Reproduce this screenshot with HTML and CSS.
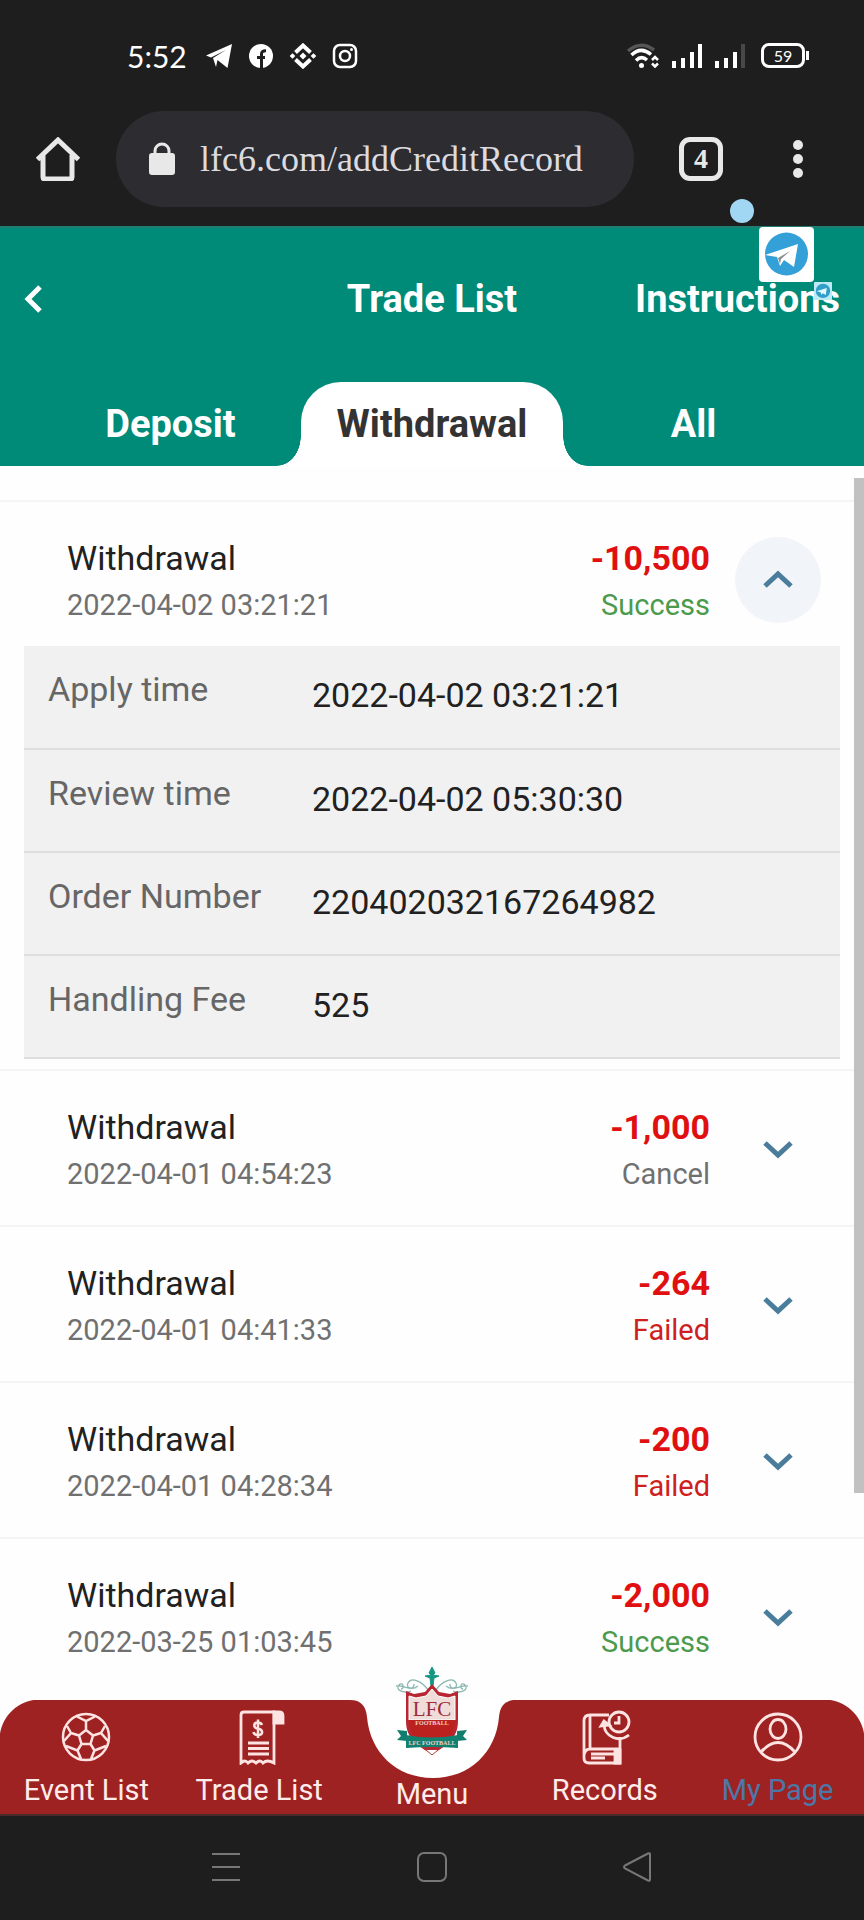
FILE: index.html
```html
<!DOCTYPE html>
<html lang="en">
<head>
<meta charset="utf-8">
<meta name="viewport" content="width=device-width, initial-scale=1">
<title>Trade List</title>
<link rel="stylesheet" href="styles.css">
</head>
<body>
<div class="statusbar">
  <div class="status-left">
    <span class="clock">5:52</span>
    <svg width="28" height="26" viewBox="0 0 28 26" fill="#fff"><path d="M1 12.500 27 1 22.500 25 12.500 17 11 24 8 15 21 7 6 14.500z"/></svg>
    <svg width="26" height="26" viewBox="0 0 26 26"><circle cx="13" cy="13" r="12" fill="#fff"/><path d="M13.500 25v-9M13.500 16v-5q0-3.500 4.500-3.300M9 14.500h8" fill="none" stroke="#1e1e1e" stroke-width="3"/></svg>
    <svg width="28" height="26" viewBox="0 0 28 26"><g fill="none" stroke="#fff" stroke-width="4"><path d="m6.500 9.500 7.500-7 7.500 7M6.500 16.500l7.500 7 7.500-7"/></g><path d="m14 9.500 3.500 3.500-3.500 3.500-3.500-3.500zM3.500 10.200 6.300 13l-2.800 2.800L.7 13zM24.500 10.200l2.800 2.800-2.800 2.800-2.800-2.800z" fill="#fff"/></svg>
    <svg width="26" height="26" viewBox="0 0 26 26" fill="none" stroke="#fff" stroke-width="2.500"><rect x="2" y="2" width="22" height="22" rx="6"/><circle cx="13" cy="13" r="5"/><circle cx="19.500" cy="6.500" r="1.500" fill="#fff" stroke="none"/></svg>
  </div>
  <div class="status-right">
    <svg width="34" height="26" viewBox="0 0 34 26" fill="none" stroke="#fff" stroke-width="3.500"><path d="M2 8Q15-3 28 7" stroke="#555"/><path d="M5.500 12Q15 3 25 11.500M10 17.500Q15.500 12 21 17"/><circle cx="15.500" cy="22.500" r="2.500" fill="#fff" stroke="none"/><path d="m26 17 3-3 3 3M26 20.500l3 3 3-3" stroke-width="2.500"/></svg>
    <svg width="32" height="26" viewBox="0 0 32 26" fill="#fff"><path d="M1 18h4v7H1zM10 15h4v10h-4zM19 9h4v16h-4zM27 1h4v24h-4z"/></svg>
    <svg width="32" height="26" viewBox="0 0 32 26" fill="#fff"><path d="M1 18h4v7H1zM10 15h4v10h-4zM19 9h4v16h-4z"/><path d="M27 1h4v24h-4z" fill="#484848"/></svg>
    <span class="battery">59</span>
  </div>
</div>
<div class="browserbar">
  <button class="plain" aria-label="Home"><svg width="44" height="44" viewBox="0 0 44 44" fill="none" stroke="#e8e8e8" stroke-width="5"><path d="M1.500 22.500 22 3l20.500 19.500M7 18v22q0 2 2 2h25q2 0 2-2V18"/></svg></button>
  <div class="address">
    <svg width="28" height="34" viewBox="0 0 28 34"><rect x="1" y="11" width="26" height="22" rx="3" fill="#e8e8e8"/><path d="M7 12V9a7 7 0 0 1 14 0v3" fill="none" stroke="#e8e8e8" stroke-width="3"/></svg>
    <input class="url" aria-label="Address" value="lfc6.com/addCreditRecord">
  </div>
  <button class="tabcount" aria-label="Open tabs">4</button>
  <button class="plain" aria-label="More"><svg width="12" height="44" viewBox="0 0 12 44" fill="#e8e8e8"><circle cx="6" cy="8" r="5"/><circle cx="6" cy="22" r="5"/><circle cx="6" cy="36" r="5"/></svg></button>
</div>
<header class="header">
  <div class="bubbles" aria-hidden="true">
    <span class="dot"></span>
    <svg class="tg-large" viewBox="0 0 55 55"><rect width="55" height="55" rx="4" fill="#fff"/><circle cx="27.500" cy="27" r="21.500" fill="#34a0d8"/><path d="M6 28 39 17l-4 23-10-7-4 6-3-9z" fill="#fff"/><path d="m19 31 12-7-9 8-1 5z" fill="#8a9095"/></svg>
    <svg class="tg-small" viewBox="0 0 55 55"><rect width="55" height="55" rx="2" fill="#bdeaf4"/><circle cx="27.500" cy="27" r="22" fill="#319fca"/><path d="M8 28 39 18l-3 22-9-6-4 5-3-8z" fill="#e5faff"/></svg>
  </div>
  <div class="titlebar">
    <button class="plain back" aria-label="Back"><svg width="20" height="28" viewBox="0 0 20 28" fill="none" stroke="#fff" stroke-width="5"><path d="M16 2 4 14l12 12"/></svg></button>
    <h1 class="title">Trade List</h1>
    <a class="instructions" href="#">Instructions</a>
  </div>
  <nav class="tabs">
    <button class="tab">Deposit</button>
    <button class="tab active">Withdrawal</button>
    <button class="tab">All</button>
  </nav>
</header>
<main class="list">
  <div class="scrollbar"></div>
  <article class="record open">
    <div class="head">
      <div class="what"><div class="kind">Withdrawal</div><div class="small">2022-04-02 03:21:21</div></div>
      <div class="sum"><div class="amount">-10,500</div><div class="small success">Success</div></div>
      <button class="toggle" aria-label="Collapse"><svg width="30" height="20" viewBox="0 0 30 20"><path d="M2 16 15 4l13 12"/></svg></button>
    </div>
    <table class="details">
      <tr><th>Apply time</th><td>2022-04-02 03:21:21</td></tr>
      <tr><th>Review time</th><td>2022-04-02 05:30:30</td></tr>
      <tr><th>Order Number</th><td>220402032167264982</td></tr>
      <tr><th>Handling Fee</th><td>525</td></tr>
    </table>
  </article>
  <article class="record">
    <div class="head">
      <div class="what"><div class="kind">Withdrawal</div><div class="small">2022-04-01 04:54:23</div></div>
      <div class="sum"><div class="amount">-1,000</div><div class="small">Cancel</div></div>
      <button class="toggle" aria-label="Expand"><svg width="30" height="20" viewBox="0 0 30 20"><path d="m2 4 13 12L28 4"/></svg></button>
    </div>
  </article>
  <article class="record">
    <div class="head">
      <div class="what"><div class="kind">Withdrawal</div><div class="small">2022-04-01 04:41:33</div></div>
      <div class="sum"><div class="amount">-264</div><div class="small failed">Failed</div></div>
      <button class="toggle" aria-label="Expand"><svg width="30" height="20" viewBox="0 0 30 20"><path d="m2 4 13 12L28 4"/></svg></button>
    </div>
  </article>
  <article class="record">
    <div class="head">
      <div class="what"><div class="kind">Withdrawal</div><div class="small">2022-04-01 04:28:34</div></div>
      <div class="sum"><div class="amount">-200</div><div class="small failed">Failed</div></div>
      <button class="toggle" aria-label="Expand"><svg width="30" height="20" viewBox="0 0 30 20"><path d="m2 4 13 12L28 4"/></svg></button>
    </div>
  </article>
  <article class="record">
    <div class="head">
      <div class="what"><div class="kind">Withdrawal</div><div class="small">2022-03-25 01:03:45</div></div>
      <div class="sum"><div class="amount">-2,000</div><div class="small success">Success</div></div>
      <button class="toggle" aria-label="Expand"><svg width="30" height="20" viewBox="0 0 30 20"><path d="m2 4 13 12L28 4"/></svg></button>
    </div>
  </article>
</main>
<nav class="bottomnav">
  <svg class="notch" viewBox="0 0 166 79" aria-hidden="true"><path d="M0 0C11 0 16 6 17 17C20 52 46 78 83 78S146 52 149 17C150 6 155 0 166 0z" fill="#fff"/></svg>
  <a class="navitem" href="#">
    <svg width="56" height="56" viewBox="0 0 56 56" fill="none" stroke="#fde4e2" stroke-width="2.500"><circle cx="28" cy="28" r="23"/><path d="m28 21 7 5.500-2.500 8.500h-9L21 26.500zM28 21v-9M35 26.500l8-2.500M32.500 35l4 6.500M23.500 35l-4 6.500M21 26.500 13 24M19 7.500l9 4.500 9-4.500M47 17l-4 7 7 8M48 37l-11.500 4.500L33 50M23 50l-3.500-8.500L8 37M6 32l7-8-4-7"/></svg>
    <span>Event List</span>
  </a>
  <a class="navitem" href="#">
    <svg width="56" height="56" viewBox="0 0 56 56" fill="none" stroke="#fde4e2" stroke-width="2.800"><path d="M44 3H13q-3 0-3 3v48q4-4 7 0 4-4 8 0 4-4 7 0 4-4 11 0V3"/><path d="M43 3h5q4 0 4 4v7h-9z" fill="#fde4e2"/><path d="M17 34h21M17 39.500h21M17 45h21"/><path d="M31 16q-1-2.500-4-2.500c-5 0-5 5.500 0 6.200 5.500.8 5.500 6.300 0 6.300q-4 0-4.500-3M27 10.500v18.500" stroke-width="2.500"/></svg>
    <span>Trade List</span>
  </a>
  <a class="navitem menu" href="#">
    <svg class="crest" viewBox="0 0 76 96" aria-hidden="true">
      <path d="m38 4-3 6 2 2-6 1 5 2 1 8h2l1-8 5-2-6-1 2-2z" fill="#159783" stroke="#159783"/>
      <g fill="none" stroke="#8cb7b2" stroke-width="1.300"><path d="M35 28C27 17 17 14 14 20s7 7 6 1M17 28C8 31 1 26 5 22s6 4 2 4M24 23C17 29 10 22 2 23M41 28c8-11 18-14 21-8s-7 7-6 1M59 28c9 3 16-2 12-6s-6 4-2 4M52 23c7 6 14-1 22 0"/></g>
      <path d="M12 28 20 31 31 29 38 21 45 29 56 31 64 28V58C64 75 53 83 38 91 23 83 12 75 12 58z" fill="#b82731"/>
      <path d="M15 33 22 35 32 33 38 26 44 33 54 35 61 33V57H15z" fill="#f0dcd9" stroke="#fff"/>
      <path d="M15 57h46c0 8-3 15-8 19H23c-5-4-8-11-8-19z" fill="#ba211f"/>
      <path d="m3 67 10 1v10l-10-1 4-4zM73 67l-10 1v10l10-1-4-4z" fill="#117d6e"/>
      <path d="M12 72q26 5 52 0v13q-26-2-52 0z" fill="#12806f"/>
      <path d="m32 87 6 5 6-5" fill="#fff" stroke="#b64040"/>
      <text x="38" y="53" class="crest-main">LFC</text>
      <text x="38" y="62" class="crest-sub">FOOTBALL</text>
      <text x="38" y="82" class="crest-sub">LFC FOOTBALL</text>
    </svg>
    <span>Menu</span>
  </a>
  <a class="navitem" href="#">
    <svg width="56" height="56" viewBox="0 0 56 56" fill="none" stroke="#fde4e2" stroke-width="2.800"><path d="M32 6H13q-6 0-6 6v37q0 5 5 5h31V28M43 40H13q-5 0-6 6M13 6v34M14 45h24M14 49h14"/><path d="M38 41h5v13h-5z" fill="#fde4e2"/><circle cx="42" cy="13" r="10"/><path d="M42 7v7h-5M27 16c1 12 15 18 25 10"/><path d="m24 17 3-5 5 4z" fill="#fde4e2"/></svg>
    <span>Records</span>
  </a>
  <a class="navitem current" href="#">
    <svg width="56" height="56" viewBox="0 0 56 56" fill="none" stroke="#fde4e2" stroke-width="2.800"><circle cx="28" cy="28" r="23"/><ellipse cx="28" cy="20" rx="8" ry="9.500"/><path d="M11 43q17-19 34 0"/></svg>
    <span>My Page</span>
  </a>
</nav>
<div class="sysnav">
  <button class="plain" aria-label="Recents"><svg width="30" height="30" viewBox="0 0 30 30" stroke="#777" stroke-width="2"><path d="M1 2h28M1 15h28M1 28h28"/></svg></button>
  <button class="plain" aria-label="Home screen"><svg width="30" height="30" viewBox="0 0 30 30" fill="none" stroke="#777" stroke-width="2"><rect x="1" y="1" width="28" height="28" rx="6"/></svg></button>
  <button class="plain" aria-label="Go back"><svg width="30" height="30" viewBox="0 0 30 30" fill="none" stroke="#777" stroke-width="2"><path d="M2 13.500 25 1.500q2-1 2 1v25q0 2-2 1L2 16.500q-2-1.500 0-3z"/></svg></button>
</div>
</body>
</html>
```
FILE: styles.css
```css
* { box-sizing: border-box; }
body {
  margin: 0;
  min-height: 100vh;
  display: flex;
  flex-direction: column;
  background: #1e1e1e;
  font-family: Roboto, "Liberation Sans", sans-serif;
  color: #212121;
}
svg { display: block; }
button { border: 0; padding: 0; background: none; font-family: inherit; color: inherit; }
a { text-decoration: none; }
.plain { display: flex; flex: none; }

.statusbar {
  height: 96px;
  padding: 15px 56px 0 127px;
  display: flex;
  align-items: center;
  justify-content: space-between;
  color: #fff;
}
.status-left, .status-right { display: flex; align-items: center; gap: 15px; }
.clock { font: 30px/30px Lato, sans-serif; margin-right: 3px; }
.status-right { gap: 11px; }
.battery {
  position: relative;
  width: 44px;
  height: 25px;
  margin: 0 3px 0 4px;
  border: 3px solid #fff;
  border-radius: 8px;
  font: 16px/19px Lato, sans-serif;
  text-align: center;
}
.battery::after {
  content: "";
  position: absolute;
  left: 42px;
  top: 5px;
  width: 3px;
  height: 9px;
  background: #fff;
}

.browserbar {
  height: 130px;
  padding: 0 60px 4px 36px;
  display: flex;
  align-items: center;
}
.address {
  flex: 1;
  min-width: 0;
  height: 96px;
  margin: 0 45px 0 36px;
  padding: 0 32px;
  display: flex;
  align-items: center;
  gap: 24px;
  border-radius: 48px;
  background: #2d2c31;
}
.address svg { flex: none; }
.url {
  flex: 1;
  min-width: 0;
  padding: 0;
  border: 0;
  outline: 0;
  background: none;
  color: #dcdce0;
  font: 36px/48px "Liberation Serif", serif;
}
.tabcount {
  flex: none;
  width: 44px;
  height: 44px;
  margin-right: 69px;
  border: 5px solid #e8e8e8;
  border-radius: 11px;
  color: #e8e8e8;
  font: bold 28px/34px "Liberation Serif", serif;
}

.header { position: relative; background: #008a78; color: #fff; border-top: 2px solid #1f7d72; }
.bubbles { position: absolute; top: -29px; right: 32px; width: 102px; height: 100px; pointer-events: none; }
.dot { position: absolute; left: 0; top: 0; width: 24px; height: 24px; border-radius: 50%; background: #a2d7f4; }
.tg-large { position: absolute; left: 29px; top: 28px; width: 55px; height: 55px; }
.tg-small { position: absolute; left: 84px; top: 83px; width: 18px; height: 18px; }
.titlebar {
  height: 154px;
  padding: 12px 24px 24px;
  display: grid;
  grid-template-columns: 1fr auto 1fr;
  align-items: center;
}
.title, .instructions, .tab { margin: 0; font-size: 38px; line-height: 44px; font-weight: 700; }
.instructions { justify-self: end; color: #fff; }
.tabs {
  height: 84px;
  display: grid;
  grid-template-columns: 1fr 262px 1fr;
  padding: 0 40px;
}
.tab { color: #fff; }
.tab.active {
  position: relative;
  background: #fff;
  color: #333;
  border-radius: 40px 40px 0 0;
}
.tab.active::before, .tab.active::after {
  content: "";
  position: absolute;
  bottom: 0;
  width: 24px;
  height: 30px;
}
.tab.active::before { right: 100%; background: radial-gradient(24px 30px at 0 0, #008a78 98%, #fff 100%); }
.tab.active::after { left: 100%; background: radial-gradient(24px 30px at 100% 0, #008a78 98%, #fff 100%); }

.list { position: relative; padding: 34px 0 7px; background: #fefefe; }
.scrollbar { position: absolute; right: 0; top: 12px; width: 10px; bottom: 207px; background: #c1c1c1; }
.record { border-top: 2px solid #f5f5f5; }
.record.open { padding-bottom: 10px; }
.head {
  height: 154px;
  padding: 0 43px 0 67px;
  display: flex;
}
.open .head { height: 144px; }
.what { flex: 1; padding-top: 33px; }
.sum { padding-top: 33px; text-align: right; }
.kind, .amount { font-size: 34px; line-height: 46px; }
.amount { color: #e01010; font-weight: 700; }
.small { font-size: 29px; line-height: 48px; color: #707070; }
.small.success { color: #4c9a4c; }
.small.failed { color: #cf2020; }
.toggle {
  width: 86px;
  height: 86px;
  margin: 35px 0 0 25px;
  display: flex;
  align-items: center;
  justify-content: center;
  border-radius: 50%;
}
.toggle path { fill: none; stroke: #4a7d9b; stroke-width: 5px; }
.open .toggle { background: #f1f4f8; }
.details {
  width: calc(100% - 48px);
  margin: 0 24px;
  border-collapse: collapse;
  table-layout: fixed;
  background: #f1f1f1;
}
.details tr { height: 103px; border-bottom: 2px solid #dedede; }
.details th, .details td { padding: 0; font-size: 34px; line-height: 40px; font-weight: 400; text-align: left; vertical-align: top; }
.details th { width: 288px; padding: 23px 0 0 24px; color: #666; }
.details td { padding-top: 29px; }

.bottomnav {
  position: relative;
  height: 116px;
  display: grid;
  grid-template-columns: repeat(5, 1fr);
  background: radial-gradient(circle at 40px 40px, #9f2222 40px, #fefefe 41px) left top / 40px 40px no-repeat,
    radial-gradient(circle at 0 40px, #9f2222 40px, #fefefe 41px) right top / 40px 40px no-repeat,
    #9f2222;
  border-bottom: 2px solid #4b2a2b;
}
.notch { position: absolute; left: calc(50% - 82px); top: 0; width: 166px; height: 79px; }
.navitem {
  position: relative;
  padding-top: 9px;
  display: flex;
  flex-direction: column;
  align-items: center;
  gap: 8px;
  color: #fdecea;
  font-size: 29px;
  line-height: 34px;
}
.current { color: #4c78a8; }
.menu { justify-content: flex-end; padding: 0 0 3px; }
.crest { position: absolute; top: -37px; width: 76px; height: 96px; }
.crest-main { font: 21px "Liberation Serif", serif; fill: #9c2a38; text-anchor: middle; }
.crest-sub { font: bold 6px "Liberation Serif", serif; fill: #f4cfc9; text-anchor: middle; }

.sysnav {
  flex: 1;
  min-height: 104px;
  padding-bottom: 2px;
  display: grid;
  grid-template-columns: repeat(3, 206px);
  justify-content: center;
  justify-items: center;
  align-items: center;
}
```
